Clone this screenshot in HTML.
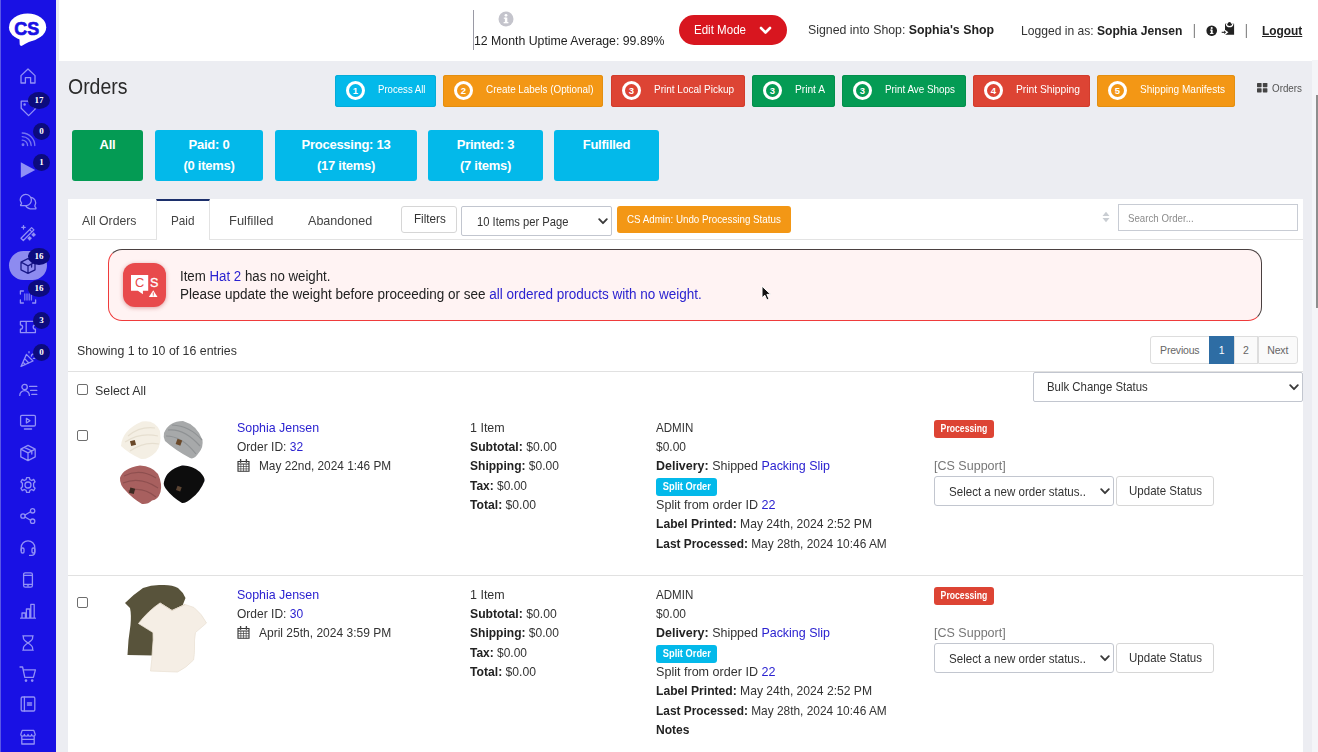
<!DOCTYPE html>
<html lang="en">
<head>
<meta charset="utf-8">
<title>Orders</title>
<style>
*{box-sizing:border-box;margin:0;padding:0}
html,body{width:1318px;height:752px;overflow:hidden}
body{position:relative;background:#ecedf2;font-family:"Liberation Sans",sans-serif;font-size:13px;color:#333;line-height:19.3px}
a{color:#2b22d0;text-decoration:none}
b{font-weight:bold;color:#222}
.abs{position:absolute}
.t{position:absolute;white-space:nowrap;line-height:1;transform-origin:0 50%}
/*CAL-START*/
#h-uptime{transform:scaleX(0.9459)}
#h-edit{transform:scaleX(0.8882)}
#h-signed{transform:scaleX(0.9489)}
#h-logged{transform:scaleX(0.9306)}
#h-logout{transform:scaleX(0.9149)}
#c-title{transform:scaleX(0.8848)}
#sb1{transform:scaleX(0.8728)}
#sb2{transform:scaleX(0.8970)}
#sb3{transform:scaleX(0.9086)}
#sb4{transform:scaleX(0.9257)}
#sb5{transform:scaleX(0.8965)}
#sb6{transform:scaleX(0.9343)}
#sb7{transform:scaleX(0.9144)}
#c-bc{transform:scaleX(0.8922)}
#tb1{transform:scaleX(0.9430)}
#tb2{transform:scaleX(0.9028)}
#tb3{transform:scaleX(0.9934)}
#tb4{transform:scaleX(0.9659)}
#f-filters{transform:scaleX(0.8971)}
#f-ipp{transform:scaleX(0.8613)}
#f-undo{transform:scaleX(0.8889)}
#f-search{transform:scaleX(0.8431)}
#al1{transform:scaleX(0.9479)}
#al2{transform:scaleX(0.9645)}
#showing{transform:scaleX(0.9490)}
#selall{transform:scaleX(0.9554)}
#bulk{transform:scaleX(0.8768)}
#r1name{transform:scaleX(0.9545)}
#r1oid{transform:scaleX(0.9239)}
#r1date{transform:scaleX(0.9101)}
#r1c3a{transform:scaleX(0.9606)}
#r1c3b{transform:scaleX(0.9375)}
#r1c3c{transform:scaleX(0.9262)}
#r1c3d{transform:scaleX(0.9205)}
#r1c3e{transform:scaleX(0.9351)}
#r1c4a{transform:scaleX(0.8892)}
#r1c4b{transform:scaleX(0.9217)}
#r1c4c{transform:scaleX(0.9592)}
#r1c4d{transform:scaleX(0.9671)}
#r1c4e{transform:scaleX(0.9312)}
#r1c4f{transform:scaleX(0.9149)}
#r1cs{transform:scaleX(0.9632)}
#r1sel{transform:scaleX(0.8901)}
#r1upd{transform:scaleX(0.8860)}
#r2name{transform:scaleX(0.9545)}
#r2oid{transform:scaleX(0.9239)}
#r2date{transform:scaleX(0.9239)}
#r2c3a{transform:scaleX(0.9606)}
#r2c3b{transform:scaleX(0.9375)}
#r2c3c{transform:scaleX(0.9262)}
#r2c3d{transform:scaleX(0.9205)}
#r2c3e{transform:scaleX(0.9351)}
#r2c4a{transform:scaleX(0.8892)}
#r2c4b{transform:scaleX(0.9217)}
#r2c4c{transform:scaleX(0.9592)}
#r2c4d{transform:scaleX(0.9671)}
#r2c4e{transform:scaleX(0.9312)}
#r2c4f{transform:scaleX(0.9149)}
#r2cs{transform:scaleX(0.9632)}
#r2sel{transform:scaleX(0.8901)}
#r2upd{transform:scaleX(0.8860)}
#r2c4g{transform:scaleX(0.9273)}
#r1split{transform:scaleX(0.9287)}
#r1proc{transform:scaleX(0.8661)}
#r2split{transform:scaleX(0.9287)}
#r2proc{transform:scaleX(0.8661)}
/*CAL-END*/
/* sidebar */
#sidebar{position:absolute;left:0;top:0;width:55.6px;height:752px;background:#1911e4}
#sidebar .strip{position:absolute;left:0;top:0;width:1px;height:752px;background:#5a57e6}
.ico{position:absolute;left:18px;width:20px;height:20px;fill:none;stroke:#9291f6;stroke-width:1.3;stroke-linecap:round;stroke-linejoin:round}
.bdg{position:absolute;width:17px;height:17px;border-radius:50%;background:#0c0b7e;color:#fff;font-family:"Liberation Serif",serif;font-size:9px;font-weight:bold;text-align:center;line-height:17px}
#active-pill{position:absolute;left:9px;top:251px;width:38px;height:29px;border-radius:15px;background:#8d8bf0}
/* header */
#header{position:absolute;left:56px;top:0;width:1262px;height:61px;background:#fff;border-left:3px solid #ecedf2}
#vline{position:absolute;left:417px;top:10px;width:1px;height:40px;background:#9a9aa5}
#editmode{position:absolute;left:623px;top:15px;width:108px;height:30px;border-radius:15px;background:#d8161f;color:#fff}
/* content */
#content{position:absolute;left:56px;top:61px;width:1256px;height:691px;background:#ecedf2}
.sbtn{position:absolute;top:75px;height:32px;border-radius:3px;color:#fff;font-size:11px}
.sbtn .num{position:absolute;left:11px;top:6px;width:19px;height:19px;border:3px solid #fff;border-radius:50%;font-size:9.5px;font-weight:bold;text-align:center;line-height:13px}
.sbtn .lbl{position:absolute;top:9px;white-space:nowrap;line-height:1;transform-origin:0 50%}
.aqua{background:#03b9ea}.orange{background:#f39715}.red{background:#dd4434}.green{background:#049b54}
.sbtn.aqua{box-shadow:inset 0 0 0 1px #05abd8}.sbtn.orange{box-shadow:inset 0 0 0 1px #e38f10}.sbtn.red{box-shadow:inset 0 0 0 1px #d23c2c}.sbtn.green{box-shadow:inset 0 0 0 1px #038f4c}
.stat{position:absolute;top:130px;height:51px;border-radius:3px;color:#fff;font-weight:bold;text-align:center;font-size:13px;line-height:21px;padding-top:4px;letter-spacing:-.25px}
#panel{position:absolute;left:68px;top:199px;width:1235px;height:553px;background:#fff}
#tabline{position:absolute;left:0;top:40px;width:1235px;height:1px;background:#e3e3e3}
#tab-paid{position:absolute;left:88px;top:0;width:54px;height:41px;background:#fff;border-top:2px solid #1c2f6b;border-left:1px solid #e3e3e3;border-right:1px solid #e3e3e3}
.btn{position:absolute;background:#fff;border:1px solid #d6d6d6;border-radius:3px;color:#333}
.sel{position:absolute;background:#fff;border:1px solid #c2c6cf;border-radius:2px}
.chev{position:absolute;width:10px;height:7px;fill:none;stroke:#3a3a3a;stroke-width:1.8;stroke-linecap:round;stroke-linejoin:round}
#alert{position:absolute;left:40px;top:50px;width:1154px;height:72px;border-radius:14px;background:#fff3f3;border:1px solid;border-color:#4a4040 #4a4040 #ef3b3b #ef3b3b}
#alert-ico{position:absolute;left:14px;top:13px;width:43px;height:44px;border-radius:12px;background:#e84a4c;box-shadow:0 1px 4px rgba(180,60,60,.45)}
.hr{position:absolute;left:0;width:1235px;height:1px;background:#e1e1e1}
.pg{position:absolute;top:137px;height:28px;border:1px solid #ddd;background:#fafafa;color:#666;font-size:10.5px;letter-spacing:-.2px;text-align:center;line-height:26px}
.cb{position:absolute;width:11px;height:11px;border:1px solid #6e6e6e;border-radius:2px;background:#fff}
.ti{display:inline-block;transform-origin:50% 50%}
.lab{position:absolute;height:17.5px;border-radius:3px;color:#fff;font-size:10px;font-weight:bold;text-align:center;line-height:17px;white-space:nowrap}
#scroll{position:absolute;left:1312px;top:60px;width:6px;height:692px;background:#f4f5f8}
#thumb{position:absolute;left:1316px;top:95px;width:2px;height:213px;background:#8e8e8e}
</style>
</head>
<body>
<!-- SIDEBAR -->
<div id="sidebar"><div class="strip"></div>
<div id="logo"><svg class="abs" style="left:0;top:0" width="56" height="56" viewBox="0 0 56 56"><ellipse cx="27.6" cy="27.2" rx="18.6" ry="13.6" fill="#fff"/><path d="M19.4 37 L19.7 44.6 Q20.4 46.6 22.4 45.6 Q28 41.5 37 39.5 Z" fill="#fff"/><text x="14.2" y="34.9" textLength="24.9" lengthAdjust="spacingAndGlyphs" font-family="Liberation Sans, sans-serif" font-weight="bold" font-size="19" fill="#1911e4" stroke="#1911e4" stroke-width=".7">CS</text></svg></div>
<div id="active-pill"></div>
<svg class="ico" style="top:66px" viewBox="0 0 20 20"><path d="M3 9.6 L10 3 L17 9.6 V17 H12.6 V11.6 H7.4 V17 H3 Z"/></svg>
<svg class="ico" style="top:97.5px" viewBox="0 0 20 20"><path d="M3.2 3.2 H10 L17.6 10.6 L10.6 17.6 L3.2 10.2 Z" /><circle cx="6.6" cy="6.6" r=".6"/></svg>
<svg class="ico" style="top:128.5px" viewBox="0 0 20 20"><g stroke="#7675f1"><circle cx="5" cy="15.8" r=".8" fill="#7675f1"/><path d="M4.2 11.2 A5.4 5.4 0 0 1 9.6 16.6 M4.2 7.6 A9 9 0 0 1 13.2 16.6 M4.2 4 A12.6 12.6 0 0 1 16.8 16.6"/></g></svg>
<svg class="ico" style="top:159.5px" viewBox="0 0 20 20"><path d="M2.8 2.3 L17.2 10 L2.8 17.7 Z" fill="#908ff6" stroke="none"/></svg>
<svg class="ico" style="top:192px" viewBox="0 0 20 20"><path d="M2.2 8 A5.6 5.6 0 1 1 8.4 13.6 H2.6 V12.6 Q3.9 12 3.5 10.9 A5.6 5.6 0 0 1 2.2 8 Z"/><path d="M12.6 5.4 A5.4 5.4 0 0 1 16.9 13.6 Q16.6 14.9 17.9 15.8 V16.8 H12.2 A5.4 5.4 0 0 1 7.6 13.6"/></svg>
<svg class="ico" style="top:223px" viewBox="0 0 20 20"><path d="M3 15.2 L13.6 4.6 L15.9 6.9 L5.3 17.5 Z M11.6 6.6 L13.9 8.9"/><path d="M5.5 2.6 V6 M3.8 4.3 H7.2" /><path d="M15.6 10.6 V12.8 M14.5 11.7 H16.7 M11.6 14.2 V16.4 M10.5 15.3 H12.7" stroke-width="2"/></svg>
<svg class="ico" style="top:255.5px" viewBox="0 0 20 20"><g stroke="#1a1988"><path d="M10 2.6 L17 6.2 V13.8 L10 17.4 L3 13.8 V6.2 Z M3 6.2 L10 9.8 L17 6.2 M10 9.8 V17.4 M13.6 8 V11"/></g></svg>
<svg class="ico" style="top:286.5px" viewBox="0 0 20 20"><path d="M2.4 7 V4 H5.4 M14.6 4 H17.6 V7 M17.6 13 V16 H14.6 M5.4 16 H2.4 V13"/><path d="M6.8 7 V13 M9 7 V13 M11.2 7 V13 M13.4 8.5 V13" stroke="#7a79f2"/></svg>
<svg class="ico" style="top:317px" viewBox="0 0 20 20"><path d="M2.4 4.4 H17.4 V7.8 A2.2 2.2 0 0 0 17.4 12.2 V15.6 H2.4 V12.2 A2.2 2.2 0 0 0 2.4 7.8 Z M8.2 4.4 V15.6"/></svg>
<svg class="ico" style="top:348.5px" viewBox="0 0 20 20"><path d="M3 17.4 L8.4 5.4 L15 12 Z M6.6 9.6 L10.8 14 M5 13.2 L7.4 15.6"/><path d="M11 2.6 V3.8 M13.4 7 Q13.6 5 15.6 5 M15.4 9.4 H17"/></svg>
<svg class="ico" style="top:380px" viewBox="0 0 20 20"><circle cx="6.6" cy="7" r="2.7"/><path d="M1.8 15.4 A4.8 4.8 0 0 1 11.4 15.4"/><path d="M11.6 6.4 H18.8 M12.6 10.4 H18.8 M13.8 14.4 H18.8"/></svg>
<svg class="ico" style="top:411.5px" viewBox="0 0 20 20"><rect x="2.6" y="3.4" width="14.8" height="10.6" rx="1.2"/><path d="M8.4 6.4 L12 8.7 L8.4 11 Z M6.4 17 H13.6"/></svg>
<svg class="ico" style="top:443px" viewBox="0 0 20 20"><path d="M10 2.4 L17.2 6.1 V13.9 L10 17.6 L2.8 13.9 V6.1 Z M2.8 6.1 L10 9.8 L17.2 6.1 M10 9.8 V17.6 M13.8 7.9 V11 M6.2 4.4 L13.8 7.9"/></svg>
<svg class="ico" style="top:474.5px" viewBox="0 0 20 20"><circle cx="10" cy="10" r="3"/><path d="M8.6 2.6 H11.4 L11.9 4.7 L13.8 5.5 L15.7 4.4 L17.1 6.8 L15.6 8.3 V11.7 L17.1 13.2 L15.7 15.6 L13.8 14.5 L11.9 15.3 L11.4 17.4 H8.6 L8.1 15.3 L6.2 14.5 L4.3 15.6 L2.9 13.2 L4.4 11.7 V8.3 L2.9 6.8 L4.3 4.4 L6.2 5.5 L8.1 4.7 Z"/></svg>
<svg class="ico" style="top:506px" viewBox="0 0 20 20"><circle cx="14.6" cy="4.8" r="2.2"/><circle cx="5" cy="10" r="2.2"/><circle cx="14.6" cy="15.2" r="2.2"/><path d="M7 9 L12.6 5.8 M7 11 L12.6 14.2"/></svg>
<svg class="ico" style="top:538px" viewBox="0 0 20 20"><path d="M3.2 12.4 V9.6 A6.8 6.8 0 0 1 16.8 9.6 V14.4 A3 3 0 0 1 13.8 17.4 H11.6"/><rect x="3.2" y="10" width="2.8" height="5" rx="1.2"/><rect x="14" y="10" width="2.8" height="5" rx="1.2"/></svg>
<svg class="ico" style="top:569.5px" viewBox="0 0 20 20"><rect x="5.6" y="2.8" width="8.8" height="14.4" rx="1.6"/><path d="M5.6 5.4 H14.4 M5.6 14.4 H14.4 M9.4 15.9 H10.6"/></svg>
<svg class="ico" style="top:601px" viewBox="0 0 20 20"><path d="M2.6 17.2 H17.4 M4 17.2 V12 H7.4 V17.2 M8.4 17.2 V8 H11.8 V17.2 M12.8 17.2 V3.4 H16.2 V17.2"/></svg>
<svg class="ico" style="top:632.5px" viewBox="0 0 20 20"><path d="M4.8 2.8 H15.2 M4.8 17.2 H15.2 M5.4 2.8 V5 Q5.4 7 10 10 Q14.6 13 14.6 15 V17.2 M14.6 2.8 V5 Q14.6 7 10 10 Q5.4 13 5.4 15 V17.2"/></svg>
<svg class="ico" style="top:664px" viewBox="0 0 20 20"><path d="M2 3 H4.6 L6.8 13.4 H15.4 L17.4 5.8 H5.2"/><circle cx="8" cy="16.6" r=".7" fill="#9291f6"/><circle cx="14.2" cy="16.6" r=".7" fill="#9291f6"/></svg>
<svg class="ico" style="top:694px" viewBox="0 0 20 20"><rect x="3.2" y="3" width="13.6" height="14" rx="1.2"/><path d="M6.4 3 V17 M9.4 9 H13.6 M9.4 11 H13.6"/></svg>
<svg class="ico" style="top:727px" viewBox="0 0 20 20"><path d="M3.8 10 V17 H16.2 V10 M2.8 7.4 L4.2 3.4 H15.8 L17.2 7.4 A1.8 1.8 0 0 1 13.6 7.4 A1.8 1.8 0 0 1 10 7.4 A1.8 1.8 0 0 1 6.4 7.4 A1.8 1.8 0 0 1 2.8 7.4 Z M3.8 12.4 H16.2"/></svg>
<span class="bdg" style="left:28.0px;top:91.7px;width:22px">17</span>
<span class="bdg" style="left:33.0px;top:122.5px;width:17px">0</span>
<span class="bdg" style="left:33.0px;top:154.0px;width:17px">1</span>
<span class="bdg" style="left:28.0px;top:248.0px;width:22px">16</span>
<span class="bdg" style="left:28.0px;top:280.3px;width:22px">16</span>
<span class="bdg" style="left:33.0px;top:311.5px;width:17px">3</span>
<span class="bdg" style="left:33.0px;top:343.5px;width:17px">0</span>
</div>
<!-- HEADER -->
<div id="header"><div class="abs" style="left:-3px;top:0">
<div id="vline"></div>
<svg class="abs" style="left:442px;top:11px" width="16" height="16" viewBox="0 0 16 16"><circle cx="8" cy="8" r="7.5" fill="#c4c4cc"/><rect x="6.9" y="6.6" width="2.4" height="5.4" fill="#fff"/><rect x="5.8" y="6.6" width="2.6" height="1.2" fill="#fff"/><rect x="5.6" y="11" width="4.8" height="1.3" fill="#fff"/><circle cx="8" cy="4.3" r="1.4" fill="#fff"/></svg>
<span class="t" id="h-uptime" style="left:418px;top:34px;color:#222">12 Month Uptime Average: 99.89%</span>
<div id="editmode"><span class="t" id="h-edit" style="left:15px;top:8px;font-size:13px">Edit Mode</span>
<svg class="abs" style="left:80px;top:11px" width="13" height="9" viewBox="0 0 13 9"><path d="M2 2 L6.5 6.5 L11 2" fill="none" stroke="#fff" stroke-width="2.6" stroke-linecap="round" stroke-linejoin="round"/></svg></div>
<span class="t" id="h-signed" style="left:752px;top:23px">Signed into Shop: <b>Sophia's Shop</b></span>
<span class="t" id="h-logged" style="left:965px;top:24px">Logged in as: <b>Sophia Jensen</b></span>
<span class="t" style="left:1136.6px;top:23.2px;color:#555;font-size:14px;transform:scaleX(.7)">|</span>
<svg class="abs" style="left:1149.8px;top:24.8px" width="11.4" height="11.4" viewBox="0 0 12 12"><circle cx="6" cy="6" r="5.6" fill="#222"/><rect x="5.1" y="4.9" width="1.9" height="4.2" fill="#fff"/><rect x="4.3" y="4.9" width="2" height="1" fill="#fff"/><rect x="4.1" y="8.4" width="3.8" height="1" fill="#fff"/><circle cx="6" cy="3.1" r="1.1" fill="#fff"/></svg>
<svg class="abs" style="left:1164px;top:20px" width="16" height="16" viewBox="1220 20 16 16"><path d="M1225 23.800 H1234.100 V34.800 H1225.200 L1228.400 32.300 L1225 29.800 Z" fill="#222"/><circle cx="1229.500" cy="23.800" r="1.700" fill="#222"/><path d="M1226.300 23.900 Q1226.600 26.700 1229.600 26.700 Q1232.600 26.700 1232.900 23.900" fill="none" stroke="#fff" stroke-width="1.2"/><path d="M1221.700 32.300 H1224.600" stroke="#222" stroke-width="1.100"/><path d="M1224.100 30.500 L1226.100 32.300 L1224.100 34.100 Z" fill="#222"/></svg>
<span class="t" style="left:1189px;top:23.2px;color:#555;font-size:14px;transform:scaleX(.7)">|</span>
<a class="t" id="h-logout" style="left:1206px;top:24px;color:#222;font-weight:bold;text-decoration:underline">Logout</a>
</div></div>
<!-- CONTENT -->
<div id="content"></div>
<h1 class="t" id="c-title" style="left:68px;top:75.5px;font-size:22px;font-weight:normal;color:#2b2b2b">Orders</h1>
<div class="sbtn aqua" style="left:335px;width:101px"><span class="num">1</span><span class="lbl" id="sb1" style="left:42.5px">Process All</span></div>
<div class="sbtn orange" style="left:443px;width:160px"><span class="num">2</span><span class="lbl" id="sb2" style="left:42.5px">Create Labels (Optional)</span></div>
<div class="sbtn red" style="left:611px;width:134px"><span class="num">3</span><span class="lbl" id="sb3" style="left:42.5px">Print Local Pickup</span></div>
<div class="sbtn green" style="left:752px;width:83px"><span class="num">3</span><span class="lbl" id="sb4" style="left:42.5px">Print A</span></div>
<div class="sbtn green" style="left:842px;width:124px"><span class="num">3</span><span class="lbl" id="sb5" style="left:42.5px">Print Ave Shops</span></div>
<div class="sbtn red" style="left:973px;width:117px"><span class="num">4</span><span class="lbl" id="sb6" style="left:42.5px">Print Shipping</span></div>
<div class="sbtn orange" style="left:1097px;width:138px"><span class="num">5</span><span class="lbl" id="sb7" style="left:42.5px">Shipping Manifests</span></div>
<svg class="abs" style="left:1257px;top:83px" width="11" height="10" viewBox="0 0 11 10"><g fill="#444"><rect x="0" y="0" width="4.6" height="4.2" rx=".6"/><rect x="5.8" y="0" width="4.6" height="4.2" rx=".6"/><rect x="0" y="5.2" width="4.6" height="4.2" rx=".6"/><rect x="5.8" y="5.2" width="4.6" height="4.2" rx=".6"/></g></svg>
<span class="t" id="c-bc" style="left:1272px;top:83px;font-size:11px;color:#555">Orders</span>
<div class="stat green" id="st1" style="left:72px;width:71px">All<br></div>
<div class="stat aqua" id="st2" style="left:155px;width:108px">Paid: 0<br>(0 items)</div>
<div class="stat aqua" id="st3" style="left:275px;width:142px">Processing: 13<br>(17 items)</div>
<div class="stat aqua" id="st4" style="left:428px;width:115px">Printed: 3<br>(7 items)</div>
<div class="stat aqua" id="st5" style="left:554px;width:105px">Fulfilled<br></div>
<div id="panel">
<div id="tabline"></div><div id="tab-paid"></div>
<span class="t" id="tb1" style="left:14px;top:14.5px;font-size:13px;color:#444">All Orders</span>
<span class="t" id="tb2" style="left:103px;top:14.5px;font-size:13px;color:#444">Paid</span>
<span class="t" id="tb3" style="left:161px;top:14.5px;font-size:13px;color:#444">Fulfilled</span>
<span class="t" id="tb4" style="left:239.5px;top:14.5px;font-size:13px;color:#444">Abandoned</span>
<div class="btn" style="left:333px;top:7px;width:56px;height:27px"></div>
<span class="t" id="f-filters" style="left:345.5px;top:13.0px;font-size:13px;">Filters</span>
<div class="sel" style="left:393px;top:7px;width:151px;height:30px"></div>
<span class="t" id="f-ipp" style="left:408.5px;top:15.8px;font-size:13px;">10 Items per Page</span>
<svg class="chev" style="left:529.5px;top:19px" viewBox="0 0 10 7"><path d="M1.2 1.2 L5 5.2 L8.8 1.2"/></svg>
<div class="abs orange" style="left:549px;top:7px;width:174px;height:27px;border-radius:3px"></div>
<span class="t" id="f-undo" style="left:558.5px;top:14.7px;font-size:11px;color:#fff">CS Admin: Undo Processing Status</span>
<svg class="abs" style="left:1034px;top:12px" width="8" height="12" viewBox="0 0 8 12"><path d="M0.5 5 L4 0.8 L7.5 5 Z M0.5 7 L4 11.2 L7.5 7 Z" fill="#c9cdd2"/></svg>
<div class="sel" style="left:1050px;top:5px;width:180px;height:27px;border-color:#c8ccd4;border-radius:0"></div>
<span class="t" id="f-search" style="left:1060px;top:13.8px;font-size:11.5px;color:#8c8c8c">Search Order...</span>
<div id="alert"><div id="alert-ico"><svg class="abs" style="left:0;top:0" width="43" height="44" viewBox="0 0 43 44"><path d="M8 12 H25.200 V27.700 H19.900 V31.300 L14.900 27.700 H8 Z" fill="#fff"/><text x="16.600" y="24.100" text-anchor="middle" font-family="Liberation Sans, sans-serif" font-size="12.800" fill="#e8494b">C</text><text x="31.200" y="24.400" text-anchor="middle" font-family="Liberation Sans, sans-serif" font-size="12.600" fill="#fff" stroke="#fff" stroke-width=".3">S</text><path d="M30.200 27.200 L34.500 34 H25.900 Z" fill="#fff"/><rect x="29.800" y="29.400" width=".9" height="2.500" fill="#e8494b"/><rect x="29.800" y="32.400" width=".9" height=".8" fill="#e8494b"/></svg></div></div>
<span class="t" id="al1" style="left:112.30000000000001px;top:69.6px;font-size:14px;color:#222">Item <a>Hat 2</a> has no weight.</span>
<span class="t" id="al2" style="left:112.30000000000001px;top:87.5px;font-size:14px;color:#222">Please update the weight before proceeding or see <a>all ordered products with no weight.</a></span>
<span class="t" id="showing" style="left:9px;top:145.2px;font-size:13px;">Showing 1 to 10 of 16 entries</span>
<div class="pg" id="pg0" style="left:1082px;width:59.5px;border-radius:3px 0 0 3px;background:#fff">Previous</div>
<div class="pg" id="pg1" style="left:1141px;width:25px;background:#2e6da4;border-color:#2e6da4;color:#fff">1</div>
<div class="pg" id="pg2" style="left:1165.5px;width:24.5px;">2</div>
<div class="pg" id="pg3" style="left:1189.5px;width:40.5px;border-radius:0 3px 3px 0">Next</div>
<div class="hr" style="top:172px"></div>
<div class="cb" style="left:9px;top:185px"></div>
<span class="t" id="selall" style="left:26.5px;top:184.8px;font-size:13px;">Select All</span>
<div class="sel" style="left:965px;top:173px;width:270px;height:30px"></div>
<span class="t" id="bulk" style="left:979.3px;top:180.8px;font-size:13px;">Bulk Change Status</span>
<svg class="chev" style="left:1220.5px;top:185px" viewBox="0 0 10 7"><path d="M1.2 1.2 L5 5.2 L8.8 1.2"/></svg>
<div class="cb" style="left:9px;top:231px"></div>
<svg class="abs" style="left:44px;top:215px" width="100" height="96" viewBox="112 414 100 96">
<defs><filter id="bl" x="-10%" y="-10%" width="120%" height="120%"><feGaussianBlur stdDeviation=".5"/></filter></defs>
<g filter="url(#bl)">
<path d="M121 446 Q122 430 142 421.500 Q155 419.500 160 431 Q162 445 156 452 Q148 460 141 459 Q128 453 121 446 Z" fill="#f4efe4"/>
<path d="M128 436 Q140 426 155 428 M125 442 Q140 432 158 436 M130 451 Q144 441 159 444" stroke="#e6dfd0" stroke-width="1.2" fill="none"/>
<rect x="130.500" y="440.500" width="5" height="5" fill="#6b4a2c" transform="rotate(-15 133 443)"/>
<path d="M164 433 Q169 421 183 421 Q197 425 202.500 440 Q203.500 447 199 452.500 Q194 460 190 458 Q175 450 165 441 Q163 437 164 433 Z" fill="#a7a9aa"/>
<path d="M168 430 Q184 428 200 446 M166 436 Q182 436 196 454 M172 425 Q190 426 202 440" stroke="#8f9294" stroke-width="1.2" fill="none"/>
<rect x="176.500" y="439.500" width="5" height="5.500" fill="#6b4a2c" transform="rotate(20 179 442)"/>
<path d="M120 478 Q123 468 140 465.500 Q152 466 158 474 Q162.500 484 160.500 492 Q158 500 152 500.500 Q148 504.500 142 504 Q132 498 126 491 Q119.500 485 120 478 Z" fill="#a8605f"/>
<path d="M124 476 Q140 468 156 478 M123 483 Q140 476 158 488 M128 491 Q142 486 156 497" stroke="#8e4f4f" stroke-width="1.200" fill="none"/>
<rect x="129.500" y="488" width="5" height="5.500" fill="#3d2c22" transform="rotate(15 132 491)"/>
<path d="M164 482 Q166 470 182 465.500 Q192 465 200 472 Q205.500 478 204.500 481 Q200 492 192 498 Q186 503.500 182 503 Q172 497 166 489 Q163 485 164 482 Z" fill="#0d0d10"/>
<rect x="176.500" y="486.500" width="4.500" height="4.500" fill="#5b4433" transform="rotate(20 179 489)"/>
</g></svg>
<span class="t" id="r1name" style="left:169.3px;top:222.0px;font-size:13px;"><a>Sophia Jensen</a></span>
<span class="t" id="r1oid" style="left:169.3px;top:241.0px;font-size:13px;">Order ID: <a>32</a></span>
<svg class="abs" style="left:169px;top:260px" width="13" height="13" viewBox="0 0 13 13"><path d="M1 2.5 H12 V12.3 H1 Z M1 5 H12" fill="none" stroke="#333" stroke-width="1.1"/><path d="M3.8 5 V12.3 M6.5 5 V12.3 M9.2 5 V12.3 M1 7.5 H12 M1 9.9 H12" fill="none" stroke="#444" stroke-width=".7"/><path d="M3.6 0.6 V3.2 M9.4 0.6 V3.2" stroke="#444" stroke-width="1.4" stroke-linecap="round"/></svg>
<span class="t" id="r1date" style="left:191.3px;top:260.0px;font-size:13px;">May 22nd, 2024 1:46 PM</span>
<span class="t" id="r1c3a" style="left:402px;top:222.0px;font-size:13px;">1 Item</span>
<span class="t" id="r1c3b" style="left:402px;top:241.0px;font-size:13px;"><b>Subtotal:</b> $0.00</span>
<span class="t" id="r1c3c" style="left:402px;top:260.0px;font-size:13px;"><b>Shipping:</b> $0.00</span>
<span class="t" id="r1c3d" style="left:402px;top:280.0px;font-size:13px;"><b>Tax:</b> $0.00</span>
<span class="t" id="r1c3e" style="left:402px;top:299.0px;font-size:13px;"><b>Total:</b> $0.00</span>
<span class="t" id="r1c4a" style="left:588px;top:222.0px;font-size:13px;">ADMIN</span>
<span class="t" id="r1c4b" style="left:588px;top:241.0px;font-size:13px;">$0.00</span>
<span class="t" id="r1c4c" style="left:588px;top:260.0px;font-size:13px;"><b>Delivery:</b> Shipped <a>Packing Slip</a></span>
<span class="lab" style="left:588px;top:279px;width:61px;background:#03b9ea"><span class="ti" id="r1split">Split Order</span></span>
<span class="t" id="r1c4d" style="left:588px;top:299.0px;font-size:13px;">Split from order ID <a>22</a></span>
<span class="t" id="r1c4e" style="left:588px;top:318.0px;font-size:13px;"><b>Label Printed:</b> May 24th, 2024 2:52 PM</span>
<span class="t" id="r1c4f" style="left:588px;top:338.0px;font-size:13px;"><b>Last Processed:</b> May 28th, 2024 10:46 AM</span>
<span class="lab" style="left:866px;top:221px;width:60px;background:#dd4434"><span class="ti" id="r1proc">Processing</span></span>
<span class="t" id="r1cs" style="left:866px;top:260.0px;font-size:13px;color:#777">[CS Support]</span>
<div class="sel" style="left:866px;top:277px;width:180px;height:30px;border-radius:3px"></div>
<span class="t" id="r1sel" style="left:881px;top:285.7px;font-size:13px;">Select a new order status..</span>
<svg class="chev" style="left:1031.5px;top:289px" viewBox="0 0 10 7"><path d="M1.2 1.2 L5 5.2 L8.8 1.2"/></svg>
<div class="btn" style="left:1048px;top:277px;width:98px;height:30px"></div>
<span class="t" id="r1upd" style="left:1060.7px;top:285.0px;font-size:13px;">Update Status</span>
<div class="hr" style="top:376px"></div>
<div class="cb" style="left:9px;top:398px"></div>
<svg class="abs" style="left:44px;top:381px" width="100" height="98" viewBox="112 580 100 98">
<g filter="url(#bl)">
<path d="M125 603 Q134 594 143 588 Q152 584.500 161.500 585 Q172 584.500 178 588 Q183 592 185.500 598 L180 612 L160 630 L154 655.500 L127.500 655 Q128 640 130.500 625 Q131.500 615 130 608 Z" fill="#59533a"/>
<path d="M138.500 623.500 Q148 611 160 603 L172 610.500 L185 604.500 L194 607.500 Q202 614 206.500 623 L195.500 632.500 Q194 640 194.500 648 Q194.500 655 193.500 660 Q186 668 177.500 672 L150.500 671 Q152 660 152.500 648 Q153.500 640 153 632.500 Z" fill="#f5eee5" stroke="#ebe2d6" stroke-width=".8"/>
<path d="M160 603 L172 610.500 L185 604.500" stroke="#e2d8ca" stroke-width="1" fill="none"/>
</g></svg>
<span class="t" id="r2name" style="left:169.3px;top:389.0px;font-size:13px;"><a>Sophia Jensen</a></span>
<span class="t" id="r2oid" style="left:169.3px;top:408.0px;font-size:13px;">Order ID: <a>30</a></span>
<svg class="abs" style="left:169px;top:427px" width="13" height="13" viewBox="0 0 13 13"><path d="M1 2.5 H12 V12.3 H1 Z M1 5 H12" fill="none" stroke="#333" stroke-width="1.1"/><path d="M3.8 5 V12.3 M6.5 5 V12.3 M9.2 5 V12.3 M1 7.5 H12 M1 9.9 H12" fill="none" stroke="#444" stroke-width=".7"/><path d="M3.6 0.6 V3.2 M9.4 0.6 V3.2" stroke="#444" stroke-width="1.4" stroke-linecap="round"/></svg>
<span class="t" id="r2date" style="left:191.3px;top:427.0px;font-size:13px;">April 25th, 2024 3:59 PM</span>
<span class="t" id="r2c3a" style="left:402px;top:389.0px;font-size:13px;">1 Item</span>
<span class="t" id="r2c3b" style="left:402px;top:408.0px;font-size:13px;"><b>Subtotal:</b> $0.00</span>
<span class="t" id="r2c3c" style="left:402px;top:427.0px;font-size:13px;"><b>Shipping:</b> $0.00</span>
<span class="t" id="r2c3d" style="left:402px;top:447.0px;font-size:13px;"><b>Tax:</b> $0.00</span>
<span class="t" id="r2c3e" style="left:402px;top:466.0px;font-size:13px;"><b>Total:</b> $0.00</span>
<span class="t" id="r2c4a" style="left:588px;top:389.0px;font-size:13px;">ADMIN</span>
<span class="t" id="r2c4b" style="left:588px;top:408.0px;font-size:13px;">$0.00</span>
<span class="t" id="r2c4c" style="left:588px;top:427.0px;font-size:13px;"><b>Delivery:</b> Shipped <a>Packing Slip</a></span>
<span class="lab" style="left:588px;top:446px;width:61px;background:#03b9ea"><span class="ti" id="r2split">Split Order</span></span>
<span class="t" id="r2c4d" style="left:588px;top:466.0px;font-size:13px;">Split from order ID <a>22</a></span>
<span class="t" id="r2c4e" style="left:588px;top:485.0px;font-size:13px;"><b>Label Printed:</b> May 24th, 2024 2:52 PM</span>
<span class="t" id="r2c4f" style="left:588px;top:505.0px;font-size:13px;"><b>Last Processed:</b> May 28th, 2024 10:46 AM</span>
<span class="t" id="r2c4g" style="left:588px;top:524.0px;font-size:13px;"><b>Notes</b></span>
<span class="lab" style="left:866px;top:388px;width:60px;background:#dd4434"><span class="ti" id="r2proc">Processing</span></span>
<span class="t" id="r2cs" style="left:866px;top:427.0px;font-size:13px;color:#777">[CS Support]</span>
<div class="sel" style="left:866px;top:444px;width:180px;height:30px;border-radius:3px"></div>
<span class="t" id="r2sel" style="left:881px;top:452.7px;font-size:13px;">Select a new order status..</span>
<svg class="chev" style="left:1031.5px;top:456px" viewBox="0 0 10 7"><path d="M1.2 1.2 L5 5.2 L8.8 1.2"/></svg>
<div class="btn" style="left:1048px;top:444px;width:98px;height:30px"></div>
<span class="t" id="r2upd" style="left:1060.7px;top:452.0px;font-size:13px;">Update Status</span>
</div>
<svg class="abs" style="left:756px;top:282px" width="20" height="22" viewBox="756 282 20 22"><path d="M762 286.2 L762 297.8 L764.8 295.2 L766.9 300 L769 299 L766.9 294.4 L770.6 294.3 Z" fill="#111" stroke="#fff" stroke-width="1" stroke-linejoin="round"/></svg>
<div id="scroll"></div><div id="thumb"></div>
</body>
</html>
